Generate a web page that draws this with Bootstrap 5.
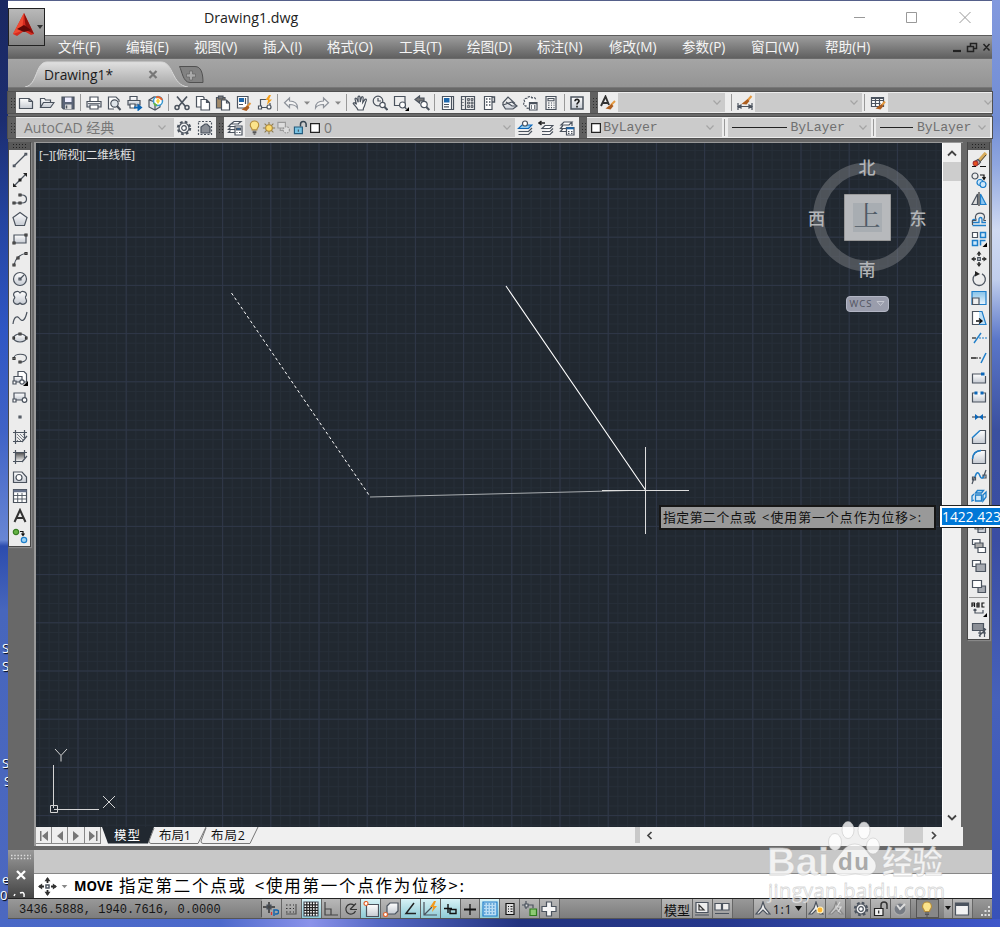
<!DOCTYPE html>
<html lang="zh-CN">
<head>
<meta charset="utf-8">
<meta name="viewport" content="width=device-width, initial-scale=1">
<title>Drawing1.dwg</title>
<link href="https://cdn.jsdelivr.net/npm/bootstrap@5.3.0/dist/css/bootstrap.min.css" rel="stylesheet">
<style>
:root{--ui:"Open Sans","Noto Sans CJK SC",sans-serif}
body{width:1000px;height:927px;overflow:hidden;font-family:var(--ui);line-height:1;color:#222;
 background:
 linear-gradient(90deg,#4968c6 0,#4d6acb 220px,#8b93ea 310px,#5468c4 380px,#22337f 520px,#26388c 720px,#3f58ca 1000px) 0 919px/1000px 8px no-repeat,
 linear-gradient(#8299de 0,#718dd4 120px,#8fa6df 165px,#cfd9f1 230px,#c0cdec 280px,#5a76c8 340px,#3b509f 430px,#3a4da3 540px,#4661bb 700px,#3852b8 919px) 992px 0/8px 919px no-repeat,
 linear-gradient(#1a2861 0,#1c2d70 120px,#2444a0 220px,#2f56c4 330px,#3f62c6 430px,#6886d4 540px,#2c4cae 546px,#4766bc 610px,#4c68c0 919px) 0 0/8px 919px no-repeat,#55608a}
symbol{fill:none;stroke:#4b535e;stroke-width:1.2}
.win{width:984px;height:918px;margin:1px 0 0 8px;background:#686868}
.h-title{height:34px;background:#fff;font-size:14.2px}
.logo{left:0;top:7px;width:37px;height:38px;border:1px solid #222;background:linear-gradient(#b9b9b9,#858585);z-index:3}
.menubar{height:24px;background:linear-gradient(#9d9d9d,#606060);border-top:1px solid #5d5d5d;border-bottom:1px solid #6a6a6a;color:#f5f5f5;font-size:13.6px;padding-left:50px}
.filetabs{height:29px;background:linear-gradient(#a5a5a5,#939393)}
.rowbar{height:21px;background:#ececec;box-shadow:0 0 0 1px #505050}
.grip{width:8px;flex:none;background:#606060 radial-gradient(#2f2f2f 40%,transparent 45%) 1px 4px/3px 3px;background-clip:content-box;background-color:#606060;border:solid #606060;border-width:4px 1px}
.cell{width:20.7px;height:100%;flex:none;display:flex;align-items:center;justify-content:center}
.cell svg,.scell svg{width:16px;height:16px;display:block;overflow:visible}
.narrow{width:11px}
.vsep{width:5.4px;flex:none;height:17px;margin:auto 0;background:linear-gradient(#999,#999) center/1px 100% no-repeat}
.combo{background:#cbcbcb;color:#777;flex:none;height:19px;margin:auto 0;white-space:nowrap}
.chev{width:8px;height:5px;flex:none}
.bylayer{font-family:"Liberation Mono",monospace;font-size:13.2px;letter-spacing:-.15px;color:#707070}
.tools{background:#ececec;border:1px solid #484848;border-top:0;box-shadow:1px 1px 1px #888}
.tools .cell{width:100%;height:19.8px}
.tgrip{height:8px;background:radial-gradient(#222 40%,transparent 45%) 0 0/3px 3px content-box,#585858;padding:1px 3px}
.canvas{border:solid #999;border-width:1px 0 0 2px}
.scr{background:#f0f0f0}
.navb{width:16.2px;height:17px;border-right:1px solid #888;border-bottom:1px solid #888;background:#eee}
.cmd{height:48px}
.cmdside{width:26px;background:linear-gradient(#999,#444)}
.cmdhist{height:24px;background:#c8c8c8;border-bottom:1px solid #888}
.cmdline{height:24px;background:#fff;color:#000}
.statusbar{height:21px;background:linear-gradient(#999,#7c7c7c);border-top:1px solid #222;border-bottom:1px solid #555}
.scell{height:19px;width:19.86px;flex:none;display:flex;align-items:center;justify-content:center;background:linear-gradient(#b8b8b8,#999);border-right:1px solid #666}
.scell.on{background:linear-gradient(#d8f2f6,#8ecbd6)}
.dyn{left:659px;top:505px;width:277px;height:25px;background:#999;border:2px solid #161616;color:#111;font-size:12.8px;white-space:nowrap;z-index:4}
.dynval{left:939px;top:505px;width:61px;height:23px;background:#fff;border:1px solid #222;border-right:0;z-index:4;padding:2px 0 2px 2px}
.dynval span{background:#0078d7;color:#fff;font-size:13.8px;overflow:hidden;white-space:nowrap}
.wm{left:760px;top:815px;z-index:5}
.desk{left:2px;width:6px;overflow:hidden;color:#fff;font-size:13px;height:16px;text-shadow:1px 1px 1px #000}
</style>
</head>
<body class="position-relative">

<!-- icon library, 16 x 16 grid -->
<svg width="0" height="0" class="position-absolute">
<defs>
<linearGradient id="gr" x2="0" y2="1"><stop stop-color="#fff"/><stop offset="1" stop-color="#c5cad2"/></linearGradient>
<linearGradient id="gd" x2="0" y2="1"><stop stop-color="#555"/><stop offset="1" stop-color="#eee"/></linearGradient>
<linearGradient id="bl" x2="0" y2="1"><stop stop-color="#86c3ea"/><stop offset="1" stop-color="#e8f4fc"/></linearGradient>
</defs>
<symbol id="new" viewBox="0 0 16 16"><path d="M1.500 3.500H11l3.500 3v7H1.500zM11 3.500v3h3.500" fill="url(#gr)"/></symbol>
<symbol id="open" viewBox="0 0 16 16"><path d="M1.500 12V3.500h4l1 1.500h5v2M1.500 12.500l3-5H15l-3.500 5z" fill="url(#gr)"/></symbol>
<symbol id="save" viewBox="0 0 16 16"><path d="M2 2h12v12H3.500L2 12.500z" fill="#5a6478"/><path d="M5 2.500h6.500V7H5z" fill="#eef" stroke="none"/><path d="M5 9.500h6.500V14H5z" fill="#ddd" stroke="none"/><path d="M6.500 10.500v3" stroke-width="1.500"/></symbol>
<symbol id="print" viewBox="0 0 16 16"><path d="M4 6V2h8v4" fill="#fff"/><path d="M1 6.500h14v5.500H1z" fill="url(#gr)"/><path d="M4 10h8v4H4z" fill="#fff"/><path d="M2 8.500h12" stroke-width=".8"/></symbol>
<symbol id="preview" viewBox="0 0 16 16"><path d="M8 14H2.500V2H10l3 3v2" fill="#fff"/><circle cx="8.500" cy="8.500" r="3.700" fill="#dfe5ea"/><path d="M11 11l3.500 4" stroke-width="2"/></symbol>
<symbol id="publish" viewBox="0 0 16 16"><path d="M3 5V1.500h7V5M1 5.500h12V10H1z" fill="url(#gr)"/><path d="M3 9v4h5V9z" fill="#fff"/><path d="M7 11.500h3.500V8.500L15.500 12.500l-5 4v-3H7z" fill="#0a64b4" stroke="none"/></symbol>
<symbol id="cube" viewBox="0 0 16 16"><path d="M1 5l5-3 6 1v9l-5 3-6-3z" fill="#e2e6ea"/><path d="M1 5l6 2v8M7 7l5-3"/><circle cx="10" cy="6" r="4.500" fill="#fff" stroke="#3898d0" stroke-width="1.500"/><path d="M8 2.500a4.500 4.500 0 0 1 6 2.500" stroke="#e6642e" stroke-width="2"/><path d="M6 8a4.500 4.500 0 0 0 3 2.500" stroke="#63b545" stroke-width="2"/><path d="M10 3l2 3-2 3-2-3z" fill="#f6d33c" stroke="none"/></symbol>
<symbol id="cut" viewBox="0 0 16 16"><path d="M3 1.500l8.500 10M13 1.500l-8.500 10" stroke-width="1.700"/><circle cx="3" cy="12.500" r="2" stroke-width="1.500"/><circle cx="13" cy="12.500" r="2" stroke-width="1.500"/></symbol>
<symbol id="copy" viewBox="0 0 16 16"><path d="M1.500 1.500H8l1 1V12H1.500z" fill="#fff"/><path d="M6 4.500h5.500l3 3V15H6zM11.500 4.500v3h3" fill="#fff"/></symbol>
<symbol id="paste" viewBox="0 0 16 16"><path d="M1.500 2.500H10V13H1.500z" fill="#a18a6a"/><path d="M3.500 1h4.500v3H3.500z" fill="#777"/><path d="M6.500 5h5l3 3v7h-8zM11.500 5v3h3" fill="#fff"/></symbol>
<symbol id="match" viewBox="0 0 16 16"><path d="M1.500 1.500H12V13H1.500z" fill="#fff"/><path d="M3 3h5v4H3z" fill="#1d67ac" stroke="none"/><path d="M9.500 3v6M3 9.500h4"/><path d="M14.500 8l-4 4" stroke="#e59a40" stroke-width="2"/><path d="M11.500 10.500l2 2-3 3.500-5-1.500z" fill="#ad5e1f" stroke="none"/></symbol>
<symbol id="blocked" viewBox="0 0 16 16"><path d="M9 4.500H3.500v7M3.500 12.500H13V8"/><path d="M1.500 11h3v3h-3z" fill="#fff"/><circle cx="12" cy="12" r="2" fill="#fff"/><path d="M12 0L8.500 5H11l-1 5L15 4.500h-3L14 0z" fill="#f4a01c" stroke="none"/></symbol>
<symbol id="undo" viewBox="0 0 16 16"><path d="M6.500 3v3c5 0 8 2 8 7-1.500-2.500-4-3.500-8-3.500V12.500L1.500 7.700z" stroke="#8d929a" fill="#f3f3f3"/></symbol>
<symbol id="redo" viewBox="0 0 16 16"><path d="M9.500 3v3c-5 0-8 2-8 7 1.500-2.500 4-3.500 8-3.500V12.500l5-4.800z" stroke="#8d929a" fill="#f3f3f3"/></symbol>
<symbol id="caret" viewBox="0 0 16 16"><path d="M5 6.500h6l-3 3.300z" fill="#888" stroke="none"/></symbol>
<symbol id="hand" viewBox="0 0 16 16"><path d="M6 15c-1-3-3.500-4.500-4.800-6.500.6-1.500 2.300-.4 3.300 1L3 3.800c.8-1 1.600-.6 2 .4l1.200 3L6 2c.5-1.200 1.600-1 2 0l.2 5L9.500 2.300c.7-1 1.600-.6 1.700.4L10.700 7.500 13 4.300c1-.6 1.700 0 1.300 1.200C12.800 8.500 13 11 11.500 13l-.3 2z" fill="#f7f7f7"/></symbol>
<symbol id="zoomrt" viewBox="0 0 16 16"><circle cx="6" cy="6" r="4.800" fill="#eee"/><path d="M6 3v3h3"/><circle cx="10.500" cy="10" r="2.700" fill="#fff"/><path d="M12.500 12l3 3" stroke-width="2"/></symbol>
<symbol id="zoomwin" viewBox="0 0 16 16"><path d="M1.500 1.500H12v9H1.500z" fill="#eee"/><circle cx="9.500" cy="10" r="3" fill="#fff"/><path d="M11.500 12l2 2"/><path d="M16 12v4h-4z" fill="#000" stroke="none"/></symbol>
<symbol id="zoomprev" viewBox="0 0 16 16"><path d="M5.500 1v2H10v3H5.500v2L1 4.500z" fill="#777"/><circle cx="10" cy="9.500" r="3.200" fill="#fff"/><path d="M12.300 12l3 3" stroke-width="2"/></symbol>
<symbol id="props" viewBox="0 0 16 16"><path d="M2.500 1.500h11v13h-11z" fill="#fff"/><path d="M4 3h5.500v4.500H4z" fill="#1d67ac" stroke="none"/><path d="M11.500 2v12M4 9.500h5M4 11.800h5"/></symbol>
<symbol id="dcenter" viewBox="0 0 16 16"><path d="M1.500 1.500h13v13h-13zM5.500 2v12M3 4v1M3 7v1M3 10v1" fill="#eee"/><path d="M7.500 3.500h2v2h-2zM11 3.500h2v2h-2zM7.500 7h2v2h-2zM11 7h2v2h-2zM7.500 10.500h2v2h-2zM11 10.500h2v2h-2z" fill="#aaa" stroke-width=".8"/></symbol>
<symbol id="palette" viewBox="0 0 16 16"><path d="M3.500 1.500h7.500v13H3.500z" fill="#fff"/><path d="M11 2h2.500v5H11M5 4h1.500M8 4h1.500M5 7h1.500M8 7h1.500M5 10h1.500M8 10h1.500" stroke-width="1.400"/></symbol>
<symbol id="sheets" viewBox="0 0 16 16"><path d="M1 10l9-3 5 4-4 3H3.500z" fill="url(#gr)"/><path d="M1 10V7.500L6 2l7 6.500M4 7l6 4h4"/></symbol>
<symbol id="markup" viewBox="0 0 16 16"><path d="M7 13c-2 1-3.500-1-3-2-3 0-3-3-1-4C1 5 3 2.500 5 3.500 6 1 9 1 10 3c2-1 4 0 3.500 2" fill="#f7f7f7" stroke-dasharray="2.500 1"/><path d="M7.500 7.500H15V15H7.500z" fill="#fff"/><path d="M7.500 8.500H15M9 11h1M12 11h1.500M9 13h1M12 13h1.500" stroke-width="1.500"/></symbol>
<symbol id="calc" viewBox="0 0 16 16"><path d="M3 1.500h10v13H3z" fill="#f3f3f3"/><path d="M5 3.500h6v2.200H5zM5 8h1.500M8 8h1M10.500 8h1M5 10.300h1.500M8 10.300h1M10.500 10.300h1M5 12.600h1.500M8 12.600h1M10.500 12.600h1" stroke-width="1.100"/></symbol>
<symbol id="help" viewBox="0 0 16 16"><path d="M2 2h12v12H2z" fill="url(#gr)" stroke-width="1.500"/><path d="M6 6.200C6 3.500 10.300 3.800 10 6.200c-.2 1.500-2 1.500-2 3.300M8 10.800v1.700" stroke="#222" stroke-width="1.700"/></symbol>
<symbol id="tstyle" viewBox="0 0 16 16"><path d="M1 11L5.500 1.500 9 10M2.700 8h5.500" stroke="#333" stroke-width="1.900"/><path d="M15 6l-4 4" stroke="#e59a40" stroke-width="2"/><path d="M11.500 9l2 2-3 3.500-5-1z" fill="#ad5e1f" stroke="none"/></symbol>
<symbol id="dstyle" viewBox="0 0 16 16"><path d="M1 8v7M15 8v7M1 11.500h14M1 11.500l3-1.500v3zM15 11.500l-3-1.500v3z"/><path d="M14.500 1L11 5" stroke="#e59a40" stroke-width="2"/><path d="M10.500 4l2 2-3 3.500-5-.5z" fill="#ad5e1f" stroke="none"/></symbol>
<symbol id="tbstyle" viewBox="0 0 16 16"><path d="M1.500 2.500h12v9h-12zM1.500 5.500h12M1.500 8.500h9M5.500 4v7M9.500 4v7" fill="#fff"/><path d="M1.500 3h12" stroke-width="2"/><path d="M15 6.500l-3 3.500" stroke="#e59a40" stroke-width="2"/><path d="M11.500 9l2 2-3 3.500-5-1z" fill="#ad5e1f" stroke="none"/></symbol>
<symbol id="gear" viewBox="0 0 16 16"><circle cx="8" cy="8" r="6.200" stroke-width="2" stroke-dasharray="2.700 2.170"/><circle cx="8" cy="8" r="5" fill="#f3f3f3"/><circle cx="8" cy="8" r="2.300" fill="#fff"/></symbol>
<symbol id="wsave" viewBox="0 0 16 16"><path d="M1.500 1.500h13v13h-13z" stroke-dasharray="2 1.500"/><path d="M4 13V7l4-3h2l3 3v6z" fill="#8b8f96"/></symbol>
<symbol id="layers" viewBox="0 0 16 16"><path d="M4 4l3-2.500h7L11 4zM8 6.500H1.500L4 4h8M8 9.500H1.500L3.500 7.500M8 12.500H1.500l2-2" fill="#fff"/><path d="M8 6h7v9H8z" fill="#fff"/><path d="M9.500 8h4v2h-4zM9.500 12.500h1M12 12.500h1.500" fill="#1d67ac"/></symbol>
<symbol id="bulb" viewBox="0 0 16 16"><path d="M5.500 10.500C5.500 8.500 3.500 8 3.500 5.500a4.500 4.500 0 0 1 9 0c0 2.500-2 3-2 5z" fill="#fbe38a" stroke="#b48d3c"/><path d="M6 12h4M6 13.500h4M7 15h2" stroke="#555"/></symbol>
<symbol id="sun" viewBox="0 0 16 16"><path d="M8 1v14M1 8h14M3 3l10 10M13 3L3 13" stroke="#8a7a52"/><circle cx="8" cy="8" r="3.800" fill="#fbd96b" stroke="#a8863c"/></symbol>
<symbol id="vpf" viewBox="0 0 16 16"><path d="M1.500 2.500h8v6h-8zM4 8.500v2.500h3" stroke="#9a9a9a" fill="#ddd"/><circle cx="10.500" cy="10.500" r="3.300" stroke="#999" stroke-dasharray="1.700 1" fill="#ddd"/></symbol>
<symbol id="lock" viewBox="0 0 16 16"><path d="M1.500 7.500h8.500v7H1.500z" fill="#79c2e2" stroke="#235b7d"/><path d="M8 7V4.500a3 3 0 0 1 6 0V7.500" stroke="#34434f" stroke-width="1.600"/><path d="M5.700 10v2.500"/></symbol>
<symbol id="sq" viewBox="0 0 16 16"><path d="M3 3h10v10H3z" fill="#fff" stroke="#222" stroke-width="1.400"/></symbol>
<symbol id="lay1" viewBox="0 0 16 16"><path d="M1.500 8.500L5 5h10l-3.500 3.500z" fill="#93ccf0" stroke="#0b66b8"/><circle cx="8" cy="3.500" r="2.500" fill="#fff"/><path d="M1.500 11.500h10L15 8M1.500 14.500h10L15 11"/></symbol>
<symbol id="lay2" viewBox="0 0 16 16"><path d="M1 3h6M3.500 1L1 3l2.500 2" stroke="#222" stroke-width="1.500"/><path d="M4 8.500L7 5.500h8L12 8.500zM4 11.500h8l3-3M4 14.500h8l3-3" fill="#fff"/></symbol>
<symbol id="lay3" viewBox="0 0 16 16"><path d="M2 5l3-3h8l-3 3zM7 8.500H1.500L4 5.500M7 11.500H1.500L4 8.500M13 2v4" fill="#fff"/><path d="M7.500 7.500H15V15H7.500z" fill="#fff"/><path d="M7.500 8.300H15" stroke="#1d67ac" stroke-width="2"/><path d="M9 11.500h1.500M12 11.500h1.500M9 13.300h1.500M12 13.300h1.500"/></symbol>

<symbol id="line" viewBox="0 0 16 16"><path d="M2 14L14 2"/><path d="M1.300 13h1.700v1.700H1.300zM13 1.300h1.700V3H13z" fill="#aaa"/></symbol>
<symbol id="xline" viewBox="0 0 16 16"><path d="M2 14L14 2"/><path d="M1 15v-4l4 4zM15 1v4l-4-4zM6.500 6.500h3v3h-3z" fill="#222" stroke="none"/></symbol>
<symbol id="pline" viewBox="0 0 16 16"><path d="M2 12h8c6 0 6-8 0-8H8"/><path d="M1 11h2v2H1zM7 11h2v2H7zM7 3h2v2H7z" fill="#aaa" stroke="#333"/></symbol>
<symbol id="poly" viewBox="0 0 16 16"><path d="M8 1.500l7 5-2.500 8h-9L1 6.500z" fill="url(#gr)"/></symbol>
<symbol id="rect" viewBox="0 0 16 16"><path d="M2 4h12v8H2z" fill="url(#gr)"/><path d="M1 11h2v2H1zM13 3h2v2h-2z" fill="#aaa" stroke="#333"/></symbol>
<symbol id="arc" viewBox="0 0 16 16"><path d="M2 14C3 8 8 3 14 2.500"/><path d="M1 13h2v2H1zM5 6h2v2H5zM13 1.500h2v2h-2z" fill="#aaa" stroke="#333"/></symbol>
<symbol id="circ" viewBox="0 0 16 16"><circle cx="8" cy="8" r="6.500" fill="url(#gr)"/><path d="M8 8l4-4M7 7h2v2H7z"/></symbol>
<symbol id="cloud" viewBox="0 0 16 16"><path d="M8 3c2-3 8-1 6 3-1 1-1 1 0 3 2 4-3 7-6 4-3 3-8 0-6-4 1-1 1-2 0-3-2-4 4-6 6-3z" fill="url(#gr)"/></symbol>
<symbol id="spline" viewBox="0 0 16 16"><path d="M1 14C2 7 5 5 7.500 8.500S13 11 15 2"/></symbol>
<symbol id="ell" viewBox="0 0 16 16"><ellipse cx="8" cy="8" rx="6.500" ry="4" fill="url(#gr)"/><path d="M7 3h2v2H7zM1 7h1.500v2H1zM13.500 7H15v2h-1.500z" fill="#aaa" stroke="#333"/></symbol>
<symbol id="earc" viewBox="0 0 16 16"><path d="M2 8c0-5 12.500-5 12.500 0 0 3-4 4-6.500 4"/><path d="M1 7.500h2v2H1zM7 11h2v2H7z" fill="#aaa" stroke="#333"/></symbol>
<symbol id="insb" viewBox="0 0 16 16"><path d="M6 7V1.500h6l2.500 2.500v8H11" fill="#fff"/><path d="M2 6.500h8V12H2z" fill="url(#gr)"/><path d="M1 11h3v3H1z" fill="#fff"/><circle cx="10" cy="12" r="2.200" fill="#fff"/><path d="M16 11v5h-5z" fill="#000" stroke="none"/></symbol>
<symbol id="mkb" viewBox="0 0 16 16"><path d="M2 4h11v7H2z" fill="url(#gr)"/><path d="M1 10h3v3H1z" fill="#fff"/><circle cx="12.500" cy="11" r="2.300" fill="#fff"/></symbol>
<symbol id="pt" viewBox="0 0 16 16"><path d="M7 7h2v2H7z" fill="#888"/></symbol>
<symbol id="hatch" viewBox="0 0 16 16"><path d="M3.500 1v14M12.500 1v8M1 3.500h14M1 12.500h9M10 13l5-6"/><path d="M5 5l7 7M8 5l4 4M5 8l4 4M5 11l1 1M11 5l1 1" stroke-width=".7"/></symbol>
<symbol id="grad" viewBox="0 0 16 16"><path d="M4 4h8v8H4z" fill="url(#gd)" stroke="none"/><path d="M3.500 1v14M12.500 1v8M1 3.500h14M1 12.500h9M10 13l5-6"/></symbol>
<symbol id="region" viewBox="0 0 16 16"><path d="M1.500 3h8.500l4.500 5v5.500h-13z" fill="url(#gr)"/><circle cx="7" cy="8.500" r="3" fill="#fff"/></symbol>
<symbol id="table" viewBox="0 0 16 16"><path d="M1.500 1.500h13v13h-13z" fill="#fff"/><path d="M1.500 3h13" stroke-width="2.500" stroke="#65718a"/><path d="M2 7.500h12M2 11h12M5.700 5v9M10 5v9" stroke-width=".9"/></symbol>
<symbol id="txt" viewBox="0 0 16 16"><path d="M2.500 14L8 2l5.500 12M4.500 10h7" stroke="#333" stroke-width="2"/></symbol>
<symbol id="addsel" viewBox="0 0 16 16"><circle cx="4" cy="4" r="2.700" fill="#66b344" stroke="#377d22"/><circle cx="12" cy="12" r="2.700" fill="#9bd2f5" stroke="#1f7fca"/><path d="M8 3.500h3V7M9.500 5.500L11 7.500l1.500-2" stroke="#111"/></symbol>

<symbol id="erase" viewBox="0 0 16 16"><path d="M15 1L7 10" stroke="#d7ab5c" stroke-width="3.500"/><path d="M15 3L8 11" stroke="#444" stroke-width="1"/><path d="M7 7.500l2.500 2.500-2 2.500H4L3 10z" fill="#bbb"/><circle cx="4.500" cy="11.500" r="2.300" fill="#e7501d" stroke="#a33"/><path d="M1 14.500h4M9 14.500h6" stroke="#111"/></symbol>
<symbol id="cpy" viewBox="0 0 16 16"><circle cx="4" cy="4" r="3"/><path d="M9 3h4v4M11.500 5L13 7.500 14.500 5" stroke="#111"/><g stroke="#1f7fca" fill="#cfe8fa"><circle cx="9" cy="10.500" r="3"/><circle cx="12" cy="12.500" r="3"/></g></symbol>
<symbol id="mirror" viewBox="0 0 16 16"><path d="M6.500 3v10.500H1z" fill="#ddd"/><path d="M9.500 3v10.500H15z" fill="#8bc6f2" stroke="#1f7fca"/><path d="M8 1v14" stroke="#333"/></symbol>
<symbol id="offset" viewBox="0 0 16 16"><path d="M1.500 14.500H15M4.500 8.500H3q-2 0-1.500 3H8V8c0-2 3-2 3 0v3.500h4" stroke="#1f7fca" stroke-width="1.300"/><path d="M1.500 14V9.500h3C6 9 4 7.500 4.500 5.500c.8-4.500 8.500-4.500 9 0 .3 2-1.500 3-.5 4h2"/></symbol>
<symbol id="array" viewBox="0 0 16 16"><path d="M1.500 1.500h5v5h-5z" fill="#fff"/><path d="M9.500 1.500h5v5h-5zM1.500 9.500h5v5h-5zM9.500 14.500v-5h5" fill="#cfe8fa" stroke="#1f7fca" stroke-width="1.500"/><path d="M16 11.500V16h-4.500z" fill="#000" stroke="none"/></symbol>
<symbol id="move" viewBox="0 0 16 16"><path d="M8 1v4M8 11v4M1 8h4M11 8h4" stroke="#222" stroke-width="1.500"/><path d="M8 0L5.500 3.500h5zM8 16l-2.500-3.500h5zM0 8l3.500-2.500v5zM16 8l-3.500-2.500v5z" fill="#333" stroke="none"/><path d="M6.700 6.700h2.600v2.600H6.700z"/></symbol>
<symbol id="rot" viewBox="0 0 16 16"><path d="M6 2.500a6.200 6.200 0 1 0 5 .3" stroke-width="1.300"/><path d="M4 0l5 3-5 2.500z" fill="#222" stroke="none"/></symbol>
<symbol id="scale" viewBox="0 0 16 16"><path d="M1 1.500h14v13H1z" fill="url(#bl)" stroke="#1f7fca"/><path d="M1.500 8H8v6.500H1.500z" fill="#eee"/></symbol>
<symbol id="stretch" viewBox="0 0 16 16"><path d="M8 1.500H1.500v13H9" fill="#fff"/><path d="M8 1.500h3l4 13H8" fill="#bfe0f6" stroke="#1f7fca"/><path d="M5 11h5M8 8.500l3 2.500-3 2.500" stroke="#111" stroke-width="1.300"/></symbol>
<symbol id="trim" viewBox="0 0 16 16"><path d="M1 8h4" stroke="#222"/><path d="M3 13L10 3" stroke="#1f7fca" stroke-width="1.400"/><path d="M8 8h8" stroke="#1f7fca" stroke-dasharray="2 1"/></symbol>
<symbol id="extend" viewBox="0 0 16 16"><path d="M0 8h5" stroke="#222" stroke-width="1.500"/><path d="M5 8h6" stroke="#222" stroke-dasharray="2 1"/><path d="M10 13l5-10" stroke="#1f7fca" stroke-width="1.500"/></symbol>
<symbol id="brkpt" viewBox="0 0 16 16"><path d="M11 4H1.500v9h13V6" fill="url(#gr)"/><path d="M10 2.500h3.500v3H10z" fill="#0b66b8" stroke="none"/></symbol>
<symbol id="brk" viewBox="0 0 16 16"><path d="M4 4H1.500v9h13V4H12" fill="url(#gr)"/><path d="M3.500 2.500h3v3h-3zM9.500 2.500h3v3h-3z" fill="#0b66b8" stroke="none"/></symbol>
<symbol id="join" viewBox="0 0 16 16"><path d="M1 8h14"/><path d="M4 5l4 3-4 3zM12 5L8 8l4 3z" fill="#0b66b8" stroke="none"/></symbol>
<symbol id="chamfer" viewBox="0 0 16 16"><path d="M1.500 9v5.500h13v-13H9" fill="url(#gr)"/><path d="M1 9L9 1.500" stroke="#1f7fca" stroke-width="1.500"/></symbol>
<symbol id="fillet" viewBox="0 0 16 16"><path d="M1.500 10v4.500h13v-13H10Q2 2 1.500 10" fill="url(#gr)"/><path d="M1.500 10Q2 2 10 1.500" stroke="#1f7fca" stroke-width="1.500"/></symbol>
<symbol id="blend" viewBox="0 0 16 16"><path d="M1 15l2.500-7M12.500 8L15 1M1.500 8h3v3h-3zM12 6h3v3h-3z"/><path d="M4 8c2-7 4-4 5-1s3 3 4 0" stroke="#1f7fca" stroke-width="1.500"/></symbol>
<symbol id="explode" viewBox="0 0 16 16"><path d="M4.500 7h6v6h-6zM4.500 5l2-2.500h6l-2 2.500zM12 13V7l3-3v5zM3 6L1 8v5l2-1" fill="#cfe8fa" stroke="#1f7fca" stroke-width="1.300"/></symbol>
<symbol id="ord1" viewBox="0 0 16 16"><path d="M1.500 1.500H9v6H1.500zM7 8.500h7.500v6H7zM4 5h8v6H4z" fill="url(#gr)"/></symbol>
<symbol id="ord2" viewBox="0 0 16 16"><path d="M1.500 1.500H9v5H1.500z" fill="#fff"/><path d="M4 5h8v5H4z" fill="#aaa"/><path d="M7 9.500h7.500v5H7z" fill="#fff"/></symbol>
<symbol id="ord3" viewBox="0 0 16 16"><path d="M1.500 2.500h8v6h-8z" fill="#fff"/><path d="M5 6h9.500v7.500H5z" fill="#a5a9b0"/></symbol>
<symbol id="ord4" viewBox="0 0 16 16"><path d="M7 8h7.500v6.500H7z" fill="#a5a9b0"/><path d="M1.500 2.500h9v7h-9z" fill="#fff"/></symbol>
<symbol id="ordt" viewBox="0 0 16 16"><path d="M1 6V2h2.500v4M1 4h2.500M6 2v4h2V2H6M6 4h2M13.500 2H11v4h2.500" stroke="#111"/><path d="M4 8v4h8V9M4 8l-1.500 1.500M4 8l1.500 1.500"/><path d="M16 12v4h-4z" fill="#000" stroke="none"/></symbol>
<symbol id="ordh" viewBox="0 0 16 16"><path d="M1.500 2.500h11v7h-11z" fill="#8b8f96"/><path d="M7 12h8M9 9v7M13.500 7v9M8 15l7-7"/></symbol>

<symbol id="infer" viewBox="0 0 16 16"><path d="M6 1v11M0 6h12" stroke="#333" stroke-width="1.500"/><path d="M4 4h4v4H4z" fill="#444"/><path d="M11 15V9h2.500c3 0 3 4-.5 4h-1" stroke="#1465ad" stroke-width="1.500"/><path d="M8.500 11v3" stroke="#d33"/></symbol>
<symbol id="snap" viewBox="0 0 16 16"><path d="M3 4h8M3 7.500h8M3 11h8" stroke="#333" stroke-dasharray="1.500 2"/><path d="M13 3v10H3" stroke="#555"/></symbol>
<symbol id="grid" viewBox="0 0 16 16"><path d="M1 1h14v14H1z" fill="#fff"/><path d="M1 3.800h14M1 6.600h14M1 9.400h14M1 12.200h14M3.800 1v14M6.600 1v14M9.400 1v14M12.200 1v14" stroke="#222"/></symbol>
<symbol id="ortho" viewBox="0 0 16 16"><path d="M2 1v13h13M2 8h6v6" stroke="#444"/></symbol>
<symbol id="polar" viewBox="0 0 16 16"><path d="M11 4.200A5 5 0 1 0 12.500 10M7 8.500h7M7 8.500l6-6" stroke="#333"/></symbol>
<symbol id="osnap" viewBox="0 0 16 16"><path d="M3.500 3.500h12v12h-12z" fill="url(#gr)"/><circle cx="3" cy="2.500" r="2" stroke="#e4632b" fill="#fff"/></symbol>
<symbol id="osnap3" viewBox="0 0 16 16"><path d="M4 5l3-3h8v8l-3 3H4z" fill="url(#gr)"/><circle cx="2.500" cy="13.500" r="2" stroke="#e4632b" fill="#fff"/></symbol>
<symbol id="otrack" viewBox="0 0 16 16"><path d="M12 2L4 12.500h10" stroke="#222" stroke-width="1.500"/></symbol>
<symbol id="ducs" viewBox="0 0 16 16"><path d="M2 1v13h13M2 14l8-8"/><path d="M12 0L8 6h3l-1 5 5-6h-3l2-5z" fill="#f29a1f" stroke="none"/></symbol>
<symbol id="dynin" viewBox="0 0 16 16"><path d="M6 3v9M2 7.500h8M8 8.500h6v4H8z" stroke="#111" stroke-width="1.400"/></symbol>
<symbol id="lwt" viewBox="0 0 16 16"><path d="M2 8.500h12" stroke="#111" stroke-width="2"/><path d="M8 3v11" stroke="#111" stroke-width="1.300"/></symbol>
<symbol id="tpy" viewBox="0 0 16 16"><path d="M1 1h14v14H1z" fill="#b8dcf4" stroke="#1f7fca"/><path d="M2 3h12M2 6h12M2 9h12M2 12h12" stroke="#4d98cf" stroke-width="1.500" stroke-dasharray="1.500 1.500"/></symbol>
<symbol id="qp" viewBox="0 0 16 16"><path d="M4 2.500h8v11H4z" fill="#ddd" stroke="#111"/><path d="M6 5.500h1M8.500 5.500h2M6 8h1M8.500 8h2M6 10.500h1M8.500 10.500h2" stroke="#111"/></symbol>
<symbol id="selc" viewBox="0 0 16 16"><path d="M4 0v8M0 4h9M7 4h4v3"/><path d="M3 3h3v3H3z" fill="#ddd"/><path d="M8 8h6.500v6.500H8z" fill="#8dca74" stroke="#2f7d1f"/></symbol>
<symbol id="ann" viewBox="0 0 16 16"><path d="M5.500 1h5v4.500H15v5h-4.500V15h-5v-4.500H1v-5h4.500z" fill="#f6f6f6"/></symbol>
<symbol id="mdl" viewBox="0 0 16 16"><path d="M2 1.500h12v10H2zM1 14h14" fill="#eee"/><path d="M5 4v5h5z" stroke="#333"/></symbol>
<symbol id="qv" viewBox="0 0 16 16"><path d="M1 2.500h6.500V9H1zM8.500 2.500H15V9H8.500zM1 12.500h14" fill="#eee"/></symbol>
<symbol id="person" viewBox="0 0 16 16"><path d="M8 1l2 6 5 6h-3L8 9l-4 4H1l5-6z" fill="#eee"/></symbol>
<symbol id="person2" viewBox="0 0 16 16"><path d="M8 1l2 6 5 6h-3L8 9l-4 4H1l5-6z" fill="#eee"/><circle cx="12" cy="9" r="3" fill="#ffb52e" stroke="#fff3c2"/></symbol>
<symbol id="person3" viewBox="0 0 16 16"><path d="M8 1l2 6 5 6h-3L8 9l-4 4H1l5-6z" fill="#c8c8c8" stroke="#888"/><path d="M12 1L9 6h4l-3 5" stroke="#ddd"/></symbol>
<symbol id="ulock" viewBox="0 0 16 16"><path d="M1.500 7.500H10v7H1.500zM5.700 9.500v3" fill="#eee" stroke="#222"/><path d="M8 7V4a3 3 0 0 1 6 0v4" stroke="#333" stroke-width="1.500"/></symbol>
<symbol id="hw" viewBox="0 0 16 16"><circle cx="8" cy="8" r="6" fill="#777c84" stroke="#aaa"/><path d="M5 4l3 4 5-5" stroke="#ddd" stroke-width="2"/></symbol>
<symbol id="cln" viewBox="0 0 16 16"><path d="M1.500 2h13v12h-13z" fill="#f3f3f3"/><path d="M2 3.500h12" stroke-width="3"/></symbol>
<symbol id="cv" viewBox="0 0 8 5"><path d="M.5 .5L4 4.200 7.500 .5" stroke="#a5a5a5"/></symbol>
</svg>

<div class="win d-flex flex-column position-relative">
  <header class="h-title d-flex align-items-center flex-none">
    <span style="margin-left:196px">Drawing1.dwg</span>
    <svg class="ms-auto" width="146" height="34" fill="none" stroke="#999"><path d="M8 16.500h11M60.500 11.500h10v10h-10zM113.500 11l11 11M124.500 11l-11 11"/></svg>
  </header>
  <div class="logo position-absolute">
    <svg width="35" height="36"><path d="M15 4L4 25l4 2 7-5 7 4 3-1z" fill="#d62a1e"/><path d="M15 4l-2 18-9 3z" fill="#ef4a32"/><path d="M15 4l2 17 8 4z" fill="#8d110d"/><path d="M8 20l7-4 7 5-7 2z" fill="#5f0806"/><path d="M28 16h6l-3 4z" fill="#333"/></svg>
  </div>
  <nav class="menubar d-flex align-items-center" id="menu"></nav>
  <div class="filetabs">
    <svg width="984" height="29">
      <defs><linearGradient id="tab" x2="0" y2="1"><stop stop-color="#e0e0e0"/><stop offset="1" stop-color="#a5a5a5"/></linearGradient></defs>
      <path d="M17 28C30 26 27 3 39 3H153C166 3 163 26 180 28z" fill="url(#tab)"/><path d="M17 28C30 26 27 3 39 3H153C166 3 163 26 180 28" fill="none" stroke="#d8d8d8"/>
      <path d="M171.500 7.500H187C193 7.500 195 14 195 23.500H182C175 23.500 174 12 171.500 7.500z" fill="#828282" stroke="#515151"/>
      <path d="M181.500 12h3v3h3v3h-3v3h-3v-3h-3v-3h3z" fill="#aaa" stroke="#666" stroke-width=".7"/>
      <path d="M141.500 12l7 7M148.500 12l-7 7" stroke="#777" stroke-width="2.200"/>
      <text x="36" y="21" font-size="14.300" fill="#1c1c1c" textLength="69" lengthAdjust="spacingAndGlyphs">Drawing1*</text>
      <path d="M0 28.500h984" stroke="#777"/>
    </svg>
  </div>

  <div class="d-flex rowbar" style="margin-top:4px">
    <div class="grip"></div>
    <div class="d-flex" data-icons="new open save | print preview publish cube | cut copy paste match blocked | undo ~ redo ~ | hand zoomrt zoomwin zoomprev | props dcenter palette sheets markup calc | help"></div>
    <div class="grip" style="margin-left:2px"></div>
    <div class="cell"><svg><use href="#tstyle"/></svg></div>
    <div class="combo d-flex align-items-center justify-content-end pe-1" style="width:107px"><svg class="chev"><use href="#cv"/></svg></div>
    <div class="vsep ms-1"></div>
    <div class="cell"><svg><use href="#dstyle"/></svg></div>
    <div class="combo d-flex align-items-center justify-content-end pe-1" style="width:107px"><svg class="chev"><use href="#cv"/></svg></div>
    <div class="vsep"></div>
    <div class="cell"><svg><use href="#tbstyle"/></svg></div>
    <div class="combo d-flex align-items-center justify-content-end flex-fill"><svg class="chev"><use href="#cv"/></svg></div>
  </div>

  <div class="d-flex rowbar" style="margin-top:4px">
    <div class="grip"></div>
    <div class="combo d-flex align-items-center justify-content-between ps-2 pe-1" style="width:158px;font-size:14px"><span>AutoCAD 经典</span><svg class="chev me-1"><use href="#cv"/></svg></div>
    <div class="d-flex" data-icons="gear wsave"></div>
    <div class="grip" style="margin-left:1px"></div>
    <div class="cell"><svg><use href="#layers"/></svg></div>
    <div class="combo d-flex align-items-center pe-1" style="width:270px"><svg width="15" height="15" style="margin-left:2px"><use href="#bulb"/></svg><svg width="14" height="14"><use href="#sun"/></svg><svg width="16" height="15"><use href="#vpf"/></svg><svg width="15" height="15" style="margin-left:1px"><use href="#lock"/></svg><svg width="14" height="14"><use href="#sq"/></svg><span style="margin-left:2px;font-size:14px">0</span><svg class="chev ms-auto"><use href="#cv"/></svg></div>
    <div class="d-flex" data-icons="lay1 lay2 lay3"></div>
    <div class="grip" style="margin-left:2px"></div>
    <div class="combo d-flex align-items-center pe-1" style="width:135px"><svg width="14" height="14" style="margin-left:2px"><use href="#sq"/></svg><span class="bylayer">ByLayer</span><svg class="chev ms-auto me-1"><use href="#cv"/></svg></div>
    <div class="vsep"></div>
    <div class="combo d-flex align-items-center" style="width:143px"><svg width="55" height="3" class="ms-1 me-1"><path d="M0 1.500h55" stroke="#222"/></svg><span class="bylayer">ByLayer</span><svg class="chev ms-auto me-1"><use href="#cv"/></svg></div>
    <div class="vsep"></div>
    <div class="combo d-flex align-items-center flex-fill" style="margin-right:2px"><svg width="33" height="3" class="ms-1 me-1"><path d="M0 1.500h33" stroke="#222"/></svg><span class="bylayer">ByLayer</span><svg class="chev ms-auto me-1"><use href="#cv"/></svg></div>
  </div>

  <main class="d-flex" style="margin-top:4px;height:704px">
    <div><div class="tools" style="width:23px"><div class="tgrip"></div><div data-icons="line xline pline poly rect arc circ cloud spline ell earc insb mkb pt hatch grad region table txt addsel"></div></div></div>
    <div class="canvas d-flex flex-column" style="margin-left:3px;width:929px">
      <div class="d-flex" style="height:684px">
        <svg width="908" height="684" viewBox="36 143 908 684" style="background:#212830" class="flex-shrink-0" fill="none">
          <defs>
            <pattern id="mn" width="9.640" height="9.640" x="77.500" y="188.500" patternUnits="userSpaceOnUse"><path d="M.5 0v10M0 .5h10" stroke="#262e38"/></pattern>
            <pattern id="mj" width="48.200" height="48.200" x="77.500" y="188.500" patternUnits="userSpaceOnUse"><path d="M.5 0v49M0 .5h49" stroke="#2f3748"/></pattern>
          </defs>
          <path d="M36 142h908v686H36z" fill="url(#mn)"/><path d="M36 142h908v686H36z" fill="url(#mj)"/>
          <text x="39" y="159" font-size="11.500" fill="#e4e4e4" textLength="96">[−][俯视][二维线框]</text>
          <circle cx="867.500" cy="217" r="49" stroke="#8c8f94" stroke-opacity=".42" stroke-width="11"/>
          <path d="M844.500 194.500h46v46h-46z" fill="#b7b9bc" stroke="#999"/><path d="M853 203h29v29h-29z" fill="#a8adb2"/>
          <g fill="#b3b5b8" font-size="17" font-weight="500" text-anchor="middle"><text x="867" y="174">北</text><text x="867" y="275.500">南</text><text x="816.500" y="224.500">西</text><text x="918" y="224.500">东</text></g>
          <text x="867" y="226" font-size="27" text-anchor="middle" fill="#4f5a65" style="font-family:'Liberation Serif','Noto Serif CJK SC','Noto Sans CJK SC',serif">上</text>
          <rect x="846.500" y="296.500" width="42" height="15" rx="3.500" fill="#9a9dac" stroke="#b3b6c4"/><text x="849.500" y="307" font-size="9.500" fill="#50535f" textLength="22">WCS</text><path d="M877 301.500h7l-3.500 4z" stroke="#c5c7d0"/>
          <path d="M231.500 293L370 496.500" stroke="#fff" stroke-dasharray="3 2.600"/>
          <path d="M370 497l260-6.500" stroke="#a9adb0"/><path d="M506 286L645.500 490M602 490.500h26" stroke="#fff" stroke-width="1.100"/>
          <path d="M645.500 447v87M602 490.500h87" stroke="#ddd"/>
          <path d="M53.500 765v43M54 809.500h45M50.500 805.500h7v7h-7zM55 749l6 6.500M67 749l-6 6.500V761.500M103 796l12 12M115 796l-12 12" stroke="#d5d5d5"/>
        </svg>
        <div class="scr d-flex flex-column align-items-center" style="width:19px;margin-left:-2px;position:relative;border-left:1px solid #fff">
          <svg width="19" height="19" fill="none" stroke="#444" stroke-width="1.800"><path d="M5 12.500l4-4 4 4"/></svg>
          <div style="width:18px;height:19px;background:#cdcdcd"></div>
          <svg class="mt-auto" width="19" height="19" fill="none" stroke="#444" stroke-width="1.800"><path d="M5 7.500l4 4 4-4"/></svg>
        </div>
      </div>
      <div class="d-flex scr flex-fill">
        <div class="navb"><svg width="16" height="17" fill="#777"><path d="M4 3h1.500v10H4zM12 3v10L6 8z"/></svg></div>
        <div class="navb"><svg width="16" height="17" fill="#777"><path d="M11 3v10L5 8z"/></svg></div>
        <div class="navb"><svg width="16" height="17" fill="#777"><path d="M5 3v10l6-5z"/></svg></div>
        <div class="navb"><svg width="16" height="17" fill="#777"><path d="M4 3v10l6-5zM11 3h1.500v10H11z"/></svg></div>
        <svg width="160" height="18" font-size="12.500"><path d="M1 0h52l-6 16.500H7z" fill="#212830"/><path d="M53 1l-5 13q0 2.500 2 2.500H97L105 0M105 1l-5 13q0 2.500 2 2.500H149L157 0" fill="none" stroke="#777"/><text x="13" y="13" fill="#fff" textLength="26">模型</text><text x="58" y="13" fill="#111" textLength="32">布局1</text><text x="110" y="13" fill="#111" textLength="34">布局2</text></svg>
        <div style="margin-left:374px;width:5px;height:16px;background:#c9c9c9"></div>
        <svg width="20" height="17" fill="none" stroke="#444" stroke-width="1.700"><path d="M11.500 5l-3.500 3.500 3.500 3.500"/></svg>
        <div class="ms-auto" style="width:19px;height:16px;background:#cdcdcd"></div>
        <svg width="20" height="17" fill="none" stroke="#444" stroke-width="1.700" style="margin-right:20px"><path d="M9 5l3.500 3.500L9 12"/></svg>
      </div>
    </div>
    <div class="ms-auto" style="margin-right:2px"><div class="tools" style="width:23px"><div class="tgrip"></div><div data-icons="erase cpy mirror offset array move rot scale stretch trim extend brkpt brk join chamfer fillet blend explode"></div><div style="height:10px"></div><div data-icons="ord1 ord2 ord3 ord4"></div><div style="height:4px;padding:1px 1px 0"><div style="height:1px;background:#999"></div></div><div data-icons="ordt ordh"></div></div></div>
  </main>

  <div class="cmd d-flex" style="margin-top:4px">
    <div class="cmdside"><svg width="26" height="48" fill="none"><path d="M3 5.500h20M3 8.500h20" stroke="#ddd" stroke-width="1.300" stroke-dasharray="1.500 1.700"/><path d="M9 21l8 8M17 21l-8 8" stroke="#fff" stroke-width="2.300"/><path d="M6 46l1-2M12 43q5-2 4 4" stroke="#fff" stroke-width="1.500"/></svg></div>
    <div class="flex-fill d-flex flex-column">
      <div class="cmdhist"></div>
      <div class="cmdline d-flex align-items-center"><svg width="19" height="19" class="ms-1"><use href="#move"/></svg><svg width="15" height="15" style="margin-right:-3px"><use href="#caret"/></svg>
        <svg width="410" height="24" font-size="15" style="font-family:'Noto Sans CJK SC',sans-serif"><text x="5" y="17" font-weight="bold" font-size="14.500" textLength="39" lengthAdjust="spacingAndGlyphs" font-family="Open Sans" style="font-family:'Open Sans',sans-serif">MOVE</text><text x="50" y="18" font-size="16.500" textLength="126">指定第二个点或</text><text x="186" y="18" font-size="16.500" textLength="209">&lt;使用第一个点作为位移&gt;:</text></svg>
      </div>
    </div>
  </div>

  <footer class="statusbar d-flex align-items-center">
    <div style="width:254px;padding:2px 0 0 11px;font:12px 'Liberation Mono',monospace;color:#151515;white-space:pre;border-right:1px solid #555;flex:none">3436.5888, 1940.7616, 0.0000</div>
    <div class="d-flex" data-status="infer snap grid* ortho polar osnap* osnap3 otrack* ducs* dynin* lwt tpy* qp selc ann"></div>
    <div class="scell" style="margin-left:101px;width:32px;font-size:13px;color:#111;white-space:nowrap;border-left:1px solid #666;padding-top:3px">模型</div>
    <div class="d-flex" data-status="mdl qv"></div>
    <div class="scell" style="margin-left:20px;width:54px;border-left:1px solid #666;font-size:12.500px;color:#111"><svg><use href="#person"/></svg><span style="letter-spacing:.7px;padding:3px 0 0 2px">1:1</span><svg style="width:12px;height:8px"><path d="M3 1h7l-3.500 5z" fill="#111"/></svg></div>
    <div class="d-flex" data-status="person2 person3"></div>
    <div class="d-flex" style="margin-left:5px" data-status="gear ulock hw"></div>
    <div class="scell" style="margin-left:5px;width:23px;border:1px solid #555;background:#888"><svg><use href="#bulb"/></svg></div>
    <div class="scell" style="margin-left:5px;width:9px"><svg style="width:7px;height:5px"><path d="M1 0h6L4 4z" fill="#111"/></svg></div>
    <div class="d-flex" data-status="cln"></div>
    <svg width="14" height="16" class="ms-1 mt-1" fill="#ddd"><path d="M11 3h2v2h-2zM7.500 7h2v2h-2zM11 7h2v2h-2zM4 11h2v2H4zM7.500 11h2v2h-2zM11 11h2v2h-2z"/></svg>
  </footer>
</div>

<!-- dynamic input prompt next to the crosshair -->
<div class="dyn position-absolute d-flex align-items-center"><svg width="272" height="21"><text x="2" y="15" fill="#111" textLength="93">指定第二个点或</text><text x="101" y="15" fill="#111" textLength="159">&lt;使用第一个点作为位移&gt;:</text></svg></div>
<div class="dynval position-absolute d-flex"><span class="flex-fill ps-0 d-flex align-items-center">1422.423</span></div>

<!-- desktop captions hidden partly behind the window -->
<div class="desk position-absolute" style="top:642px">S</div><div class="desk position-absolute" style="top:660px">S</div>
<div class="desk position-absolute" style="top:757px">S</div><div class="desk position-absolute" style="top:775px;left:4px;width:4px">S</div>
<div class="desk position-absolute" style="top:873px">e</div><div class="desk position-absolute" style="top:889px;left:0;width:8px">0</div>

<svg class="wm position-absolute" width="200" height="90" font-family="Liberation Sans" font-weight="bold">
  <g fill="#fff" fill-opacity=".78" stroke="#bbb" stroke-opacity=".6" stroke-width=".8">
    <text x="7" y="60" font-size="39" textLength="62" lengthAdjust="spacingAndGlyphs">Bai</text>
    <ellipse cx="75" cy="27" rx="6.500" ry="8.500"/><ellipse cx="88" cy="15" rx="6" ry="8.500"/><ellipse cx="104" cy="15.500" rx="6" ry="8.500"/><ellipse cx="113" cy="31" rx="6.500" ry="8"/>
    <path d="M95 29C104 29 107 38 113 44S116 61 104 60q-9-2-17 0C73 62 69 52 76 44S86 29 95 29z"/>
    <text x="122" y="58" font-size="31" font-family="Noto Sans CJK SC" textLength="61">经验</text>
    <text x="8" y="83" font-size="20" font-weight="normal" font-family="Open Sans" textLength="177">jingyan.baidu.com</text>
  </g>
  <text x="78" y="55" font-size="24" fill="#aaa" textLength="31">du</text>
</svg>

<script src="https://cdn.jsdelivr.net/npm/bootstrap@5.3.0/dist/js/bootstrap.bundle.min.js"></script>
<script>
// menu captions with the width of each entry
[['文件(F)',68],['编辑(E)',68],['视图(V)',69],['插入(I)',64],['格式(O)',72],['工具(T)',68],['绘图(D)',70],['标注(N)',72],['修改(M)',73],['参数(P)',69],['窗口(W)',74],['帮助(H)',60]].forEach(([t,w])=>{
  const a=document.createElement('a');a.textContent=t;a.className='text-reset text-decoration-none text-nowrap flex-shrink-0';a.style.width=w+'px';menu.append(a);
});
menu.insertAdjacentHTML('beforeend','<svg class="ms-auto" width="46" height="20" fill="none" stroke="#222" stroke-width="1.500"><path d="M7 14h8" stroke-width="2.200"/><path d="M21.500 9.500h6v5h-6zM24.500 9V6.500h6v5H28M37.500 7l6 6.500M43.500 7l-6 6.500"/></svg>');
const use=i=>`<svg><use href="#${i}"/></svg>`;
document.querySelectorAll('[data-icons]').forEach(e=>e.innerHTML=e.dataset.icons.split(' ').map(i=>i=='|'?'<div class="vsep"></div>':i=='~'?`<div class="cell narrow">${use('caret')}</div>`:`<div class="cell">${use(i)}</div>`).join(''));
document.querySelectorAll('[data-status]').forEach(e=>e.innerHTML=e.dataset.status.split(' ').map(i=>`<div class="scell${i.endsWith('*')?' on':''}">${use(i.replace('*',''))}</div>`).join(''));
</script>
</body>
</html>
